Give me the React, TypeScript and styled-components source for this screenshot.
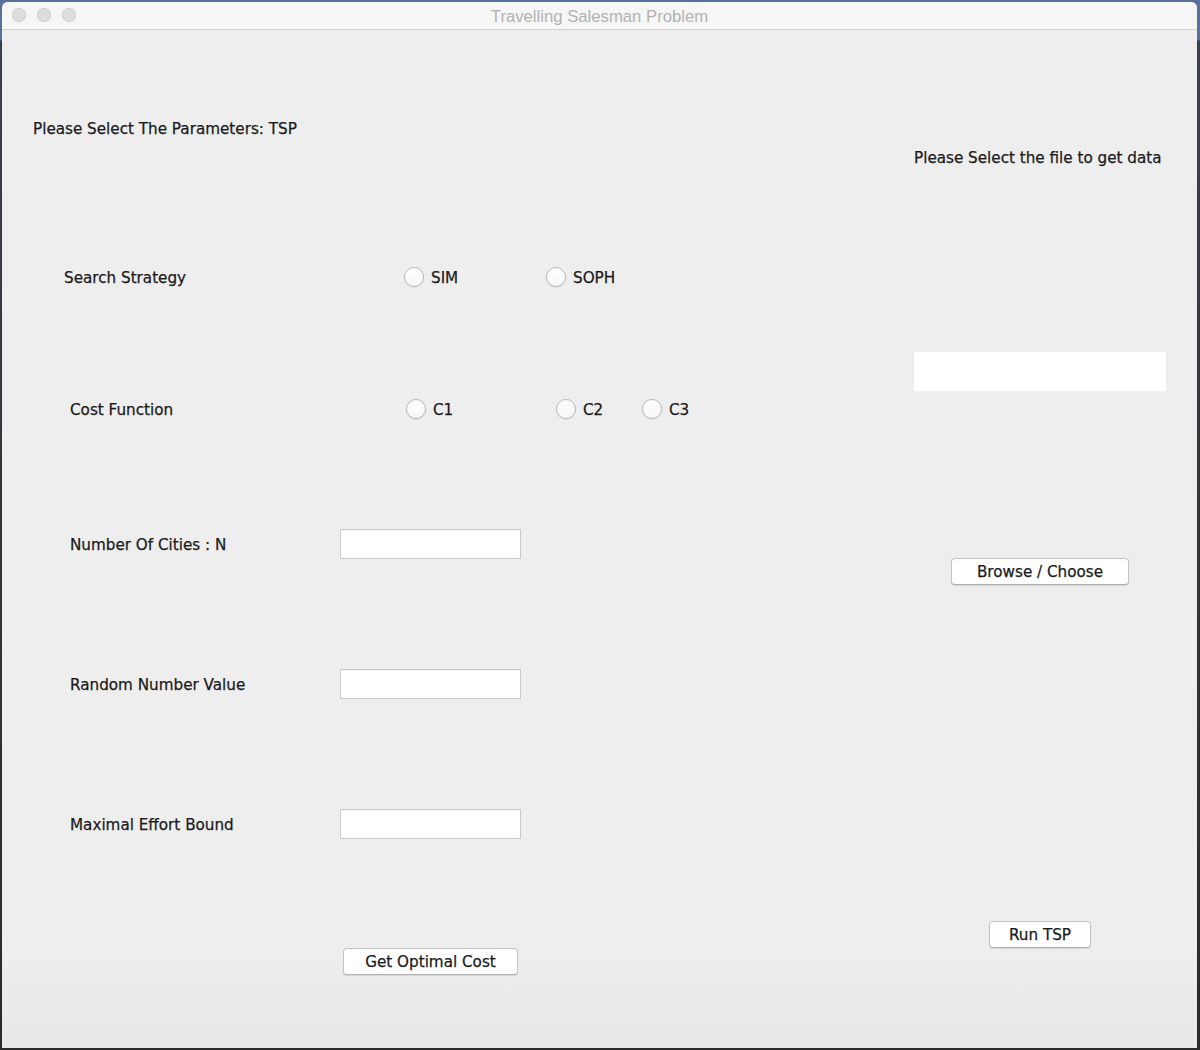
import React from "react";
import styled, { createGlobalStyle } from "styled-components";

const GlobalStyle = createGlobalStyle`
	html, body {
		margin: 0;
		padding: 0;
		height: 100%;
	}
	body {
		background: linear-gradient(to bottom, #56719c 0px, #56719c 40px, #3b3f46 41px, #2a2a2a 100%);
		font-family: "DejaVu Sans", "Liberation Sans", sans-serif;
		-webkit-font-smoothing: antialiased;
	}
	#root {
		height: 100%;
	}
`;

const Desktop = styled.div`
	height: 1050px;
	padding: 2px 3px 2px 2px;
	box-sizing: border-box;
	display: flex;
`;

const Window = styled.div`
	flex: 1;
	display: flex;
	flex-direction: column;
	background: #eeeeee;
	border-radius: 6px 6px 0 0;
	overflow: hidden;
`;

const TitleBar = styled.div`
	position: relative;
	height: 28px;
	flex-shrink: 0;
	display: flex;
	align-items: center;
	justify-content: center;
	box-sizing: border-box;
	padding-top: 2px;
	background: #f6f6f6;
	border-bottom: 1px solid #d3d3d3;
`;

const TrafficLights = styled.div`
	position: absolute;
	left: 10px;
	top: 6px;
	display: flex;
	gap: 11px;
`;

const Light = styled.span`
	width: 14px;
	height: 14px;
	border-radius: 50%;
	background: #dddddd;
	box-shadow: inset 0 0 0 1px #d2d2d2;
`;

const Title = styled.div`
	font-family: "Liberation Sans", Arial, sans-serif;
	font-size: 16.7px;
	color: #b2b2b2;
`;

const Content = styled.div`
	flex: 1;
	display: grid;
	grid-template-columns: 1fr 252px;
	padding: 0 31px;
	background: linear-gradient(to bottom, #eeeeee 90%, #e8e8e8 100%);
`;

const Column = styled.div`
	display: flex;
	flex-direction: column;
`;

const RightColumn = styled(Column)`
	align-items: center;
`;

// Swing's Lucida Grande reads a touch heavier than DejaVu, so thicken slightly
const textStyle = `
	font-size: 15.2px;
	color: #1a1a1a;
	-webkit-text-stroke: 0.25px #1a1a1a;
	white-space: nowrap;
`;

const Heading = styled.div<{ $top: number }>`
	${textStyle}
	margin-top: ${({ $top }) => $top}px;
	line-height: 18px;
	align-self: flex-start;
`;

const Row = styled.div<{ $top: number; $indent: number; $labelWidth: number; $height: number }>`
	margin-top: ${({ $top }) => $top}px;
	padding-left: ${({ $indent }) => $indent}px;
	height: ${({ $height }) => $height}px;
	display: grid;
	grid-template-columns: ${({ $labelWidth }) => $labelWidth}px auto;
	align-items: center;
`;

const Label = styled.span`
	${textStyle}
	padding-top: 2px;
`;

const RadioGroup = styled.div`
	display: flex;
	align-items: center;
`;

const RadioOption = styled.label<{ $width?: number }>`
	${textStyle}
	display: flex;
	align-items: center;
	gap: 7px;
	width: ${({ $width }) => ($width ? `${$width}px` : "auto")};
`;

const RadioText = styled.span`
	padding-top: 2px;
`;

const RadioCircle = styled.span`
	width: 20px;
	height: 20px;
	box-sizing: border-box;
	border-radius: 50%;
	background: linear-gradient(to bottom, #ffffff, #f7f7f7);
	border: 1px solid #b9b9b9;
	box-shadow: 0 0.5px 1px rgba(0, 0, 0, 0.12);
	-webkit-text-stroke: 0;
`;

const TextInput = styled.div`
	width: 181px;
	height: 30px;
	box-sizing: border-box;
	background: #ffffff;
	border: 1px solid #c9c9c9;
	box-shadow: inset 0 1px 1px rgba(0, 0, 0, 0.06);
`;

const FileField = styled.div<{ $top: number }>`
	margin-top: ${({ $top }) => $top}px;
	width: 252px;
	height: 39px;
	background: #ffffff;
`;

const Button = styled.button<{ $top: number; $width: number; $indent?: number }>`
	${textStyle}
	margin-top: ${({ $top }) => $top}px;
	margin-left: ${({ $indent }) => ($indent ? `${$indent}px` : "0")};
	width: ${({ $width }) => $width}px;
	height: 27px;
	padding: 0;
	background: #ffffff;
	border: 1px solid #c3c3c3;
	border-bottom-color: #b0b0b0;
	border-radius: 4px;
	box-shadow: 0 1px 1px rgba(0, 0, 0, 0.1);
	font-family: "DejaVu Sans", "Liberation Sans", sans-serif;
	cursor: pointer;
`;

const LeftButton = styled(Button)`
	align-self: flex-start;
`;

const fields = [
	{ label: "Number Of Cities : N", top: 109 },
	{ label: "Random Number Value", top: 110 },
	{ label: "Maximal Effort Bound", top: 110 },
];

const App = () => {
	return (
		<>
			<GlobalStyle />
			<Desktop>
				<Window>
					<TitleBar>
						<TrafficLights>
							<Light />
							<Light />
							<Light />
						</TrafficLights>
						<Title>Travelling Salesman Problem</Title>
					</TitleBar>
					<Content>
						<Column>
							<Heading $top={90}>Please Select The Parameters: TSP</Heading>

							<Row $top={128} $indent={31} $labelWidth={340} $height={22}>
								<Label>Search Strategy</Label>
								<RadioGroup>
									<RadioOption $width={142}>
										<RadioCircle />
										<RadioText>SIM</RadioText>
									</RadioOption>
									<RadioOption>
										<RadioCircle />
										<RadioText>SOPH</RadioText>
									</RadioOption>
								</RadioGroup>
							</Row>

							<Row $top={110} $indent={37} $labelWidth={336} $height={22}>
								<Label>Cost Function</Label>
								<RadioGroup>
									<RadioOption $width={150}>
										<RadioCircle />
										<RadioText>C1</RadioText>
									</RadioOption>
									<RadioOption $width={86}>
										<RadioCircle />
										<RadioText>C2</RadioText>
									</RadioOption>
									<RadioOption>
										<RadioCircle />
										<RadioText>C3</RadioText>
									</RadioOption>
								</RadioGroup>
							</Row>

							{fields.map((f) => (
								<Row key={f.label} $top={f.top} $indent={37} $labelWidth={270} $height={30}>
									<Label>{f.label}</Label>
									<TextInput />
								</Row>
							))}

							<LeftButton $top={109} $width={175} $indent={310}>
								Get Optimal Cost
							</LeftButton>
						</Column>

						<RightColumn>
							<Heading $top={119}>Please Select the file to get data</Heading>
							<FileField $top={185} />
							<Button $top={167} $width={178}>
								Browse / Choose
							</Button>
							<Button $top={336} $width={102}>
								Run TSP
							</Button>
						</RightColumn>
					</Content>
				</Window>
			</Desktop>
		</>
	);
};

export default App;
